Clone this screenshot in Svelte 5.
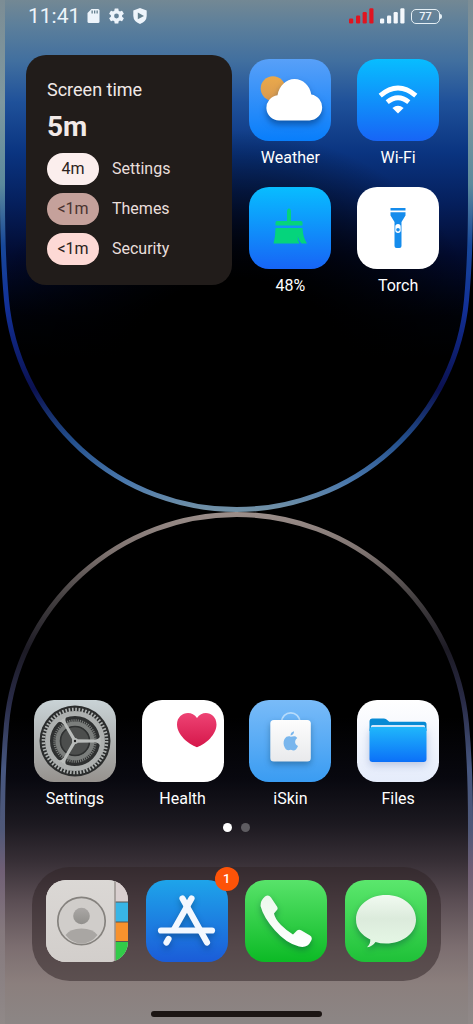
<script lang="ts">
  const usage = [
    { time: '4m', app: 'Settings', tone: 'light' },
    { time: '<1m', app: 'Themes', tone: 'dark' },
    { time: '<1m', app: 'Security', tone: 'pink' },
  ];

  const topApps = [
    { id: 'weather', label: 'Weather' },
    { id: 'wifi', label: 'Wi-Fi' },
    { id: 'cleaner', label: '48%' },
    { id: 'torch', label: 'Torch' },
  ];

  const apps = [
    { id: 'settings', label: 'Settings' },
    { id: 'health', label: 'Health' },
    { id: 'iskin', label: 'iSkin' },
    { id: 'files', label: 'Files' },
  ];

  const dock = [
    { id: 'contacts', label: 'Contacts', badge: 0 },
    { id: 'store', label: 'App Store', badge: 1 },
    { id: 'phone', label: 'Phone', badge: 0 },
    { id: 'messages', label: 'Messages', badge: 0 },
  ];

  const battery = 77;
  let page = $state(0);
</script>

{#snippet gradient(id: string, stops: [number, string][])}
  <linearGradient {id} x1="0" y1="0" x2="0" y2="1">
    {#each stops as [at, color]}
      <stop offset="{at}%" stop-color={color} />
    {/each}
  </linearGradient>
{/snippet}

{#snippet signal(cls: string)}
  <svg class={cls} width="25" height="16" viewBox="0 0 25 16" aria-hidden="true">
    <rect x="0" y="10.5" width="4.2" height="5" rx="1.2" />
    <rect x="7" y="7.5" width="4.2" height="8" rx="1.2" />
    <rect x="13.6" y="4" width="4.2" height="11.5" rx="1.2" />
    <rect x="20.3" y="0.3" width="4.2" height="15.2" rx="1.2" />
  </svg>
{/snippet}

{#snippet art(id: string)}
  <svg class="art" viewBox="0 0 82 82" aria-hidden="true">
    {#if id === 'weather'}
      <rect width="82" height="82" fill="url(#g-weather)" />
      <circle cx="24" cy="29.5" r="12.3" fill="url(#g-sun)" />
      <path class="drop-deep" fill="#fff" d="M30 61.500a12.700 12.700 0 0 1-1.500-25.300C30 27 37 20 45.500 20S61 26.500 62.300 35.500A13.100 13.100 0 0 1 60.500 61.500Z" />
    {:else if id === 'wifi'}
      <rect width="82" height="82" fill="url(#g-blue)" />
      <g fill="none" stroke="#fff" stroke-width="4.8">
        <path d="M23.200 36.700Q41 21.500 58.800 36.700" />
        <path d="M30.200 43.200Q41 34.300 51.800 43.200" />
      </g>
      <path fill="#fff" d="M41 54.500 35.400 49Q41 44.600 46.600 49Z" />
    {:else if id === 'cleaner'}
      <rect width="82" height="82" fill="url(#g-blue)" />
      <g fill="#05d47c">
        <path d="M38 34V25q0-3.500 2-3.500t2 3.500v9h10q1.500 0 1.500 1.500V38.500H26.500V35.500q0-1.500 1.500-1.500Z" />
        <path d="M26.500 41H53.500Q54 50.500 58 56.500H52.500Q49.500 53.500 48.700 49.500 48.500 53.500 50.500 56.500H24.500Q26.500 49 26.500 41Z" />
      </g>
    {:else if id === 'torch'}
      <rect width="82" height="82" fill="#fff" />
      <path fill="#158cec" d="M33.500 21h15v2.500h-15ZM33.500 25.200h15v3.300l-4 6.500V59q0 2-2 2h-3q-2 0-2-2V35l-4-6.500Z" />
      <rect x="38.3" y="37" width="5.4" height="9" rx="2.7" fill="#fff" />
      <circle cx="41" cy="42.8" r="1.8" fill="#158cec" />
    {:else if id === 'settings'}
      <rect width="82" height="82" fill="url(#g-metal)" />
      <circle cx="41" cy="41" r="35.5" fill="#2b2d2d" />
      <circle cx="41" cy="41" r="31.5" fill="none" stroke="#aeb2b1" stroke-width="3.6" stroke-dasharray="1.65 1.649" />
      <circle cx="41" cy="41" r="27.500" fill="#2e3030" stroke="#adb0af" stroke-width="5" />
      <circle cx="41" cy="41" r="20.5" fill="none" stroke="#7b7e7c" stroke-width="2.6" stroke-dasharray="1.1 1.047" />
      <circle cx="41" cy="41" r="17.3" fill="#4c4e4d" stroke="#7b7e7c" stroke-width="4.4" />
      <circle cx="41" cy="41" r="14.5" fill="none" stroke="#2f3131" stroke-width="1.6" />
      {#each [0, 120, 240] as angle}
        <path fill="#b9bcba" transform="rotate({angle} 41 41)" d="M41 39.300 61 39.600Q65 39.300 66.500 36V46Q65 42.700 61 42.400L41 42.700Z" />
      {/each}
      <circle cx="41" cy="41" r="3" fill="#b9bcba" />
      <circle cx="41" cy="41" r="1.2" fill="#222" />
    {:else if id === 'health'}
      <rect width="82" height="82" fill="#fff" />
      <path fill="url(#g-heart)" d="M55 47.300C46 44 35 34.500 35 24.500 35 13 49 9 55 18 61 9 74.500 13 74.500 24.500 74.500 34.500 64 44 55 47.300Z" />
    {:else if id === 'iskin'}
      <rect width="82" height="82" fill="url(#g-skin)" />
      <path d="M32.500 23C32.500 9.500 51 9.500 51 23" fill="none" stroke="#b6dbfb" stroke-width="1.6" />
      <rect class="drop" x="21.3" y="20" width="40.5" height="41.5" rx="3.5" fill="url(#g-bag)" />
      <g fill="#79b6ed">
        <path d="M41.800 36.700C43.500 36.700 46 35 48.300 38 45 40.500 45.700 44.500 49 46 47 51 45 51 41.800 49.800 38.500 51 36.500 50 34.900 45.500 33.500 38.500 38 35 41.800 36.700Z" />
        <path d="M41.600 35.600Q41.500 32.300 45 31.300 45.200 34.800 41.600 35.600Z" />
      </g>
    {:else if id === 'files'}
      <rect width="82" height="82" fill="url(#g-paper)" />
      <path fill="#078bd5" d="M12.500 30V21.500q0-3 3-3H27q2 0 3.500 1.700l1.700 1.600H67q2.500 0 2.500 2.500V31H12.500Z" />
      <rect x="14" y="25" width="54" height="8" rx="1.5" fill="#d8efff" />
      <rect class="drop-soft" x="12.5" y="27" width="57" height="35" rx="3" fill="url(#g-folder)" />
    {:else if id === 'contacts'}
      <rect width="82" height="82" fill="#d6d2cf" />
      <rect x="69" width="13" height="22" fill="#d9cfcf" />
      <rect x="69" y="22" width="13" height="20" fill="#38b5e6" />
      <rect x="69" y="42" width="13" height="19.5" fill="#f7922d" />
      <rect x="69" y="61.5" width="13" height="21" fill="#32cb49" />
      <path d="M69 22H82M69 42H82M69 61.500H82" stroke="#5a554f" />
      <rect x="-2" y="-2" width="71" height="86" fill="url(#g-book)" />
      <path d="M69 0V82" stroke="#98938f" stroke-width="1.5" />
      <circle cx="35.5" cy="41" r="23.7" fill="#d0cdca" stroke="#85827e" stroke-width="1.7" />
      <circle cx="35.5" cy="36" r="8.3" fill="url(#g-person)" />
      <path fill="#a9a6a3" d="M19.500 55Q24 48.500 35.500 48.500T51.500 55Q45 63.500 35.500 63.500T19.500 55Z" />
    {:else if id === 'store'}
      <rect width="82" height="82" fill="url(#g-store)" />
      <g class="drop" fill="none" stroke="#f3f8ff" stroke-width="6.2" stroke-linecap="round">
        <path d="M36.500 18.500 61 62.500" />
        <path d="M45.500 18.500 28 49.500" />
        <path d="M15 50.500H66" />
        <path d="M22.500 59 20.500 62.500" />
      </g>
    {:else if id === 'phone'}
      <rect width="82" height="82" fill="url(#g-phone)" />
      <path class="drop" fill="url(#g-white)" d="M20 16.500Q23.500 14 26 17.500L32 26.500Q33.500 29 31.500 30.500L29 33.500Q30 39 36 45T48 54.500L52 50.500Q54 49 56.500 50.500L65 55.500Q68 57.500 66 61 62.500 68.500 54 66.500 41.500 63.500 30 50.500T15.500 26Q15.500 20 20 16.500Z" />
    {:else if id === 'messages'}
      <rect width="82" height="82" fill="url(#g-message)" />
      <path class="drop" fill="url(#g-bubble)" d="M41 15C57.500 15 71 25.500 71 39.500S57.500 63.500 41 63.500Q35 63.500 30.500 62 27.500 66.500 22 67.300 25.500 64 25.300 59.500 11 52.500 11 39.500C11 25.500 24.500 15 41 15Z" />
    {/if}
  </svg>
{/snippet}

{#snippet appTile(app: { id: string; label: string })}
  <button class="app">
    {@render art(app.id)}
    <span class="app-label">{app.label}</span>
  </button>
{/snippet}

<div class="phone">
  <svg class="wallpaper" viewBox="0 0 473 1024" preserveAspectRatio="none" aria-hidden="true">
    <defs>
      <linearGradient id="sky" gradientUnits="userSpaceOnUse" x1="0" y1="0" x2="0" y2="510">
        <stop offset="0" stop-color="#738894" />
        <stop offset=".05" stop-color="#5c7f9b" />
        <stop offset=".12" stop-color="#416f9f" />
        <stop offset=".2" stop-color="#1f519a" />
        <stop offset=".3" stop-color="#0a3480" />
        <stop offset=".4" stop-color="#051f5c" />
        <stop offset=".5" stop-color="#020b30" />
        <stop offset=".62" stop-color="#000209" />
        <stop offset=".7" stop-color="#000" />
      </linearGradient>
      <radialGradient id="shade" gradientUnits="userSpaceOnUse" cx="236" cy="400" r="270">
        <stop offset=".45" stop-color="#000" />
        <stop offset="1" stop-color="#000" stop-opacity="0" />
      </radialGradient>
      <linearGradient id="sky-ring" gradientUnits="userSpaceOnUse" x1="0" y1="0" x2="0" y2="512">
        <stop offset="0" stop-color="#7c8d95" />
        <stop offset=".2" stop-color="#7e989f" />
        <stop offset=".36" stop-color="#5c8a9c" />
        <stop offset=".48" stop-color="#17479a" />
        <stop offset=".6" stop-color="#123097" />
        <stop offset=".76" stop-color="#0b1150" />
        <stop offset=".86" stop-color="#234f8c" />
        <stop offset=".94" stop-color="#4a78ac" />
        <stop offset="1" stop-color="#7593a6" />
      </linearGradient>
      <linearGradient id="earth" gradientUnits="userSpaceOnUse" x1="0" y1="512" x2="0" y2="1024">
        <stop offset=".4" stop-color="#000" />
        <stop offset=".52" stop-color="#08080f" />
        <stop offset=".61" stop-color="#1c1920" />
        <stop offset=".68" stop-color="#362e35" />
        <stop offset=".76" stop-color="#5b4e54" />
        <stop offset=".85" stop-color="#7c6e70" />
        <stop offset=".92" stop-color="#8b7f7d" />
        <stop offset="1" stop-color="#8c8685" />
      </linearGradient>
      <linearGradient id="earth-ring" gradientUnits="userSpaceOnUse" x1="0" y1="512" x2="0" y2="1024">
        <stop offset="0" stop-color="#9b8e8a" />
        <stop offset=".08" stop-color="#7d726f" />
        <stop offset=".17" stop-color="#433f40" />
        <stop offset=".27" stop-color="#1c1a24" />
        <stop offset=".37" stop-color="#292b47" />
        <stop offset=".5" stop-color="#46567f" />
        <stop offset=".62" stop-color="#4f5878" />
        <stop offset=".7" stop-color="#705f75" />
        <stop offset=".82" stop-color="#85797d" />
        <stop offset="1" stop-color="#908988" />
      </linearGradient>
      {@render gradient('g-weather', [[0, '#58a0f8'], [100, '#087efb']])}
      {@render gradient('g-sun', [[0, '#eaa94b'], [100, '#d99a50']])}
      {@render gradient('g-blue', [[0, '#08bdff'], [100, '#1765f6']])}
      {@render gradient('g-metal', [[0, '#c9d3d6'], [100, '#96928e']])}
      {@render gradient('g-heart', [[0, '#ee4374'], [100, '#d5174a']])}
      {@render gradient('g-skin', [[0, '#79bbf8'], [100, '#3a9cf2']])}
      {@render gradient('g-bag', [[0, '#fdfdfd'], [100, '#e9eaec']])}
      {@render gradient('g-paper', [[0, '#ffffff'], [100, '#e5ecfb']])}
      {@render gradient('g-folder', [[0, '#20b7fb'], [100, '#0b70f8']])}
      {@render gradient('g-book', [[0, '#dbd8d5'], [100, '#d2cecb']])}
      {@render gradient('g-person', [[0, '#aaa7a5'], [100, '#918f8c']])}
      {@render gradient('g-store', [[0, '#1ea4ea'], [100, '#1b5cd8']])}
      {@render gradient('g-phone', [[0, '#58e36a'], [100, '#0cba25']])}
      {@render gradient('g-white', [[0, '#ecf8ec'], [100, '#ffffff']])}
      {@render gradient('g-message', [[0, '#5be76d'], [100, '#1fc138']])}
      {@render gradient('g-bubble', [[0, '#f1faf1'], [45, '#dcebdc'], [100, '#e6f8e6']])}
    </defs>
    <rect width="473" height="1024" />
    <g stroke-width="5">
      <path fill="url(#sky)" d="M2.500-5V200Q2.500 257 6.500 300A231 231 0 0 0 466.500 300Q470.500 257 470.500 200V-5Z" />
      <path fill="url(#shade)" d="M2.500-5V200Q2.500 257 6.500 300A231 231 0 0 0 466.500 300Q470.500 257 470.500 200V-5Z" />
      <path fill="none" stroke="url(#sky-ring)" d="M2.500-5V200Q2.500 257 6.500 300A231 231 0 0 0 466.500 300Q470.500 257 470.500 200V-5" />
      <path fill="url(#earth)" stroke="url(#earth-ring)" d="M2.500 1030V824Q2.500 767 6.500 724A231 231 0 0 1 466.500 724Q470.500 767 470.500 824V1030" />
    </g>
  </svg>

  <header class="status">
    <span class="clock">11:41</span>
    <svg class="glyph" width="13" height="16" viewBox="0 0 13 16" aria-hidden="true">
      <path d="M4.500 1H11q1.500 0 1.500 1.500V13.500Q12.500 15 11 15H2Q.5 15 .5 13.500V5Z" />
      <path class="cut" d="M4.500 2.500h1.300v3H4.500ZM7 2.500h1.300v3H7ZM9.500 2.500h1.300v3H9.500Z" />
    </svg>
    <svg class="glyph" width="15" height="16" viewBox="2 2 20 20" aria-hidden="true">
      <path fill-rule="evenodd" d="M19.430 12.980a7.800 7.800 0 0 0 0-1.960l2.110-1.650a.5.500 0 0 0 .12-.64l-2-3.460a.5.500 0 0 0-.61-.22l-2.490 1a7.300 7.300 0 0 0-1.690-.98l-.38-2.650A.5.500 0 0 0 14 2h-4a.5.500 0 0 0-.49.420l-.38 2.650c-.61.250-1.170.590-1.690.980l-2.490-1a.5.500 0 0 0-.61.220l-2 3.460a.5.500 0 0 0 .12.640l2.110 1.650a7.800 7.800 0 0 0 0 1.960l-2.110 1.650a.5.500 0 0 0-.12.640l2 3.460c.12.220.39.300.61.220l2.490-1c.52.400 1.080.730 1.690.980l.38 2.650c.3.240.24.420.49.420h4c.25 0 .46-.18.490-.42l.38-2.650c.61-.25 1.170-.59 1.690-.98l2.490 1c.23.090.49 0 .61-.22l2-3.460a.5.500 0 0 0-.12-.64ZM12 15.200a3.200 3.200 0 1 1 0-6.400 3.200 3.200 0 0 1 0 6.400Z" />
    </svg>
    <svg class="glyph" width="14" height="16" viewBox="0 0 14 16" aria-hidden="true">
      <path d="M7 0 13.700 2.500V8Q13.500 13.500 7 16 .5 13.500.3 8V2.500Z" />
      <path class="cut" d="M4.800 4.500 11 8 4.800 11.300Z" />
    </svg>
    <div class="status-right">
      {@render signal('bars alert')}
      {@render signal('bars')}
      <span class="battery">{battery}</span>
    </div>
  </header>

  <main class="grid">
    <section class="widget">
      <h2>Screen time</h2>
      <p class="total">5m</p>
      <ul>
        {#each usage as row}
          <li><span class="pill {row.tone}">{row.time}</span>{row.app}</li>
        {/each}
      </ul>
    </section>
    {#each topApps as app}
      {@render appTile(app)}
    {/each}
  </main>

  <div class="grid lower">
    {#each apps as app}
      {@render appTile(app)}
    {/each}
  </div>

  <div class="dots">
    {#each [0, 1] as i}
      <button class="dot" class:on={page === i} aria-label="Page {i + 1}" onclick={() => (page = i)}></button>
    {/each}
  </div>

  <nav class="dock">
    {#each dock as app}
      <button class="dock-app" aria-label={app.label}>
        {@render art(app.id)}
        {#if app.badge}<span class="badge">{app.badge}</span>{/if}
      </button>
    {/each}
  </nav>

  <div class="home-bar"></div>
</div>

<style>
  :global(body) { background: #000; }

  .phone {
    position: relative;
    isolation: isolate;
    display: flex;
    flex-direction: column;
    min-height: 100vh;
    padding-bottom: 7px;
    box-sizing: border-box;
    overflow: hidden;
    color: #fff;
    font-family: Roboto, sans-serif;
  }

  .wallpaper {
    position: absolute;
    inset: 0;
    z-index: -1;
    width: 100%;
    height: 100%;
  }

  button {
    padding: 0;
    border: 0;
    background: none;
    color: inherit;
    font: inherit;
    cursor: pointer;
  }

  /* Status bar */
  .status {
    display: flex;
    align-items: center;
    gap: 9px;
    height: 32px;
    padding: 0 33px 0 28px;
    color: #edf4fb;
  }
  .clock { font-size: 21px; line-height: 32px; margin-right: -2px; }
  .glyph { fill: #edf4fb; }
  .cut { fill: #64808f; }
  .status-right { display: flex; align-items: center; gap: 6px; margin-left: auto; }
  .bars { fill: #f4f8fc; }
  .alert { fill: #e01420; }
  .battery {
    position: relative;
    width: 27px;
    height: 13px;
    border: 1px solid #e4eef4;
    border-radius: 5px;
    font-size: 11px;
    font-weight: 500;
    line-height: 14px;
    text-align: center;
  }
  .battery::after {
    content: '';
    position: absolute;
    top: 4px;
    right: -3px;
    width: 2px;
    height: 5px;
    border-radius: 0 2px 2px 0;
    background: #e4eef4;
  }

  /* App grid */
  .grid {
    display: grid;
    grid-template-columns: repeat(4, 1fr);
    row-gap: 16px;
    margin: 23px 21px 0;
  }
  .lower { margin-top: auto; }

  .app {
    display: flex;
    flex-direction: column;
    align-items: center;
    gap: 6px;
    padding-top: 4px;
  }
  .art {
    display: block;
    width: 82px;
    height: 82px;
    border-radius: 20px;
  }
  .app-label { padding-top: 1px; font-size: 16px; line-height: 19px; }

  .drop { filter: drop-shadow(0 3px 3px rgb(0 40 60 / .35)); }
  .drop-deep { filter: drop-shadow(0 4px 3px rgb(0 50 110 / .55)); }
  .drop-soft { filter: drop-shadow(0 3px 4px rgb(60 90 160 / .3)); }

  /* Screen time */
  .widget {
    grid-column: span 2;
    grid-row: span 2;
    align-self: start;
    margin: 0 5px;
    padding: 23px 21px 20px;
    border-radius: 20px;
    background: #211c1a;
    color: #f1e9e7;
  }
  h2 { margin: 0; font-size: 18px; font-weight: 400; line-height: 24px; }
  .total { margin: 7px 0 8px; font-size: 28px; font-weight: 700; line-height: 36px; }
  ul {
    display: grid;
    gap: 8px;
    margin: 0;
    padding: 0;
    list-style: none;
  }
  li { display: flex; align-items: center; gap: 13px; font-size: 16px; line-height: 32px; color: #e9dfdc; }
  .pill {
    width: 52px;
    border-radius: 16px;
    color: #2b2220;
    text-align: center;
  }
  .light { background: #fbeeed; }
  .dark { background: #c5a19b; color: #4a3330; }
  .pink { background: #fdd9d5; }

  /* Page dots */
  .dots { display: flex; justify-content: center; gap: 9px; margin-top: 15px; }
  .dot { width: 9px; height: 9px; border-radius: 50%; background: #5e5c61; }
  .dot.on { background: #fff; }

  /* Dock */
  .dock {
    display: flex;
    justify-content: space-between;
    margin: 35px 32px 0;
    padding: 13px 14px 19px;
    border-radius: 38px;
    background: rgb(45 34 36 / .5);
  }
  .dock-app { position: relative; }
  .badge {
    position: absolute;
    top: -13px;
    right: -11px;
    width: 24px;
    border-radius: 50%;
    background: #fd5308;
    font-size: 13px;
    font-weight: 500;
    line-height: 24px;
    text-align: center;
  }

  .home-bar {
    align-self: center;
    width: 36%;
    height: 6px;
    margin-top: 30px;
    border-radius: 3px;
    background: #1c1513;
  }
</style>
